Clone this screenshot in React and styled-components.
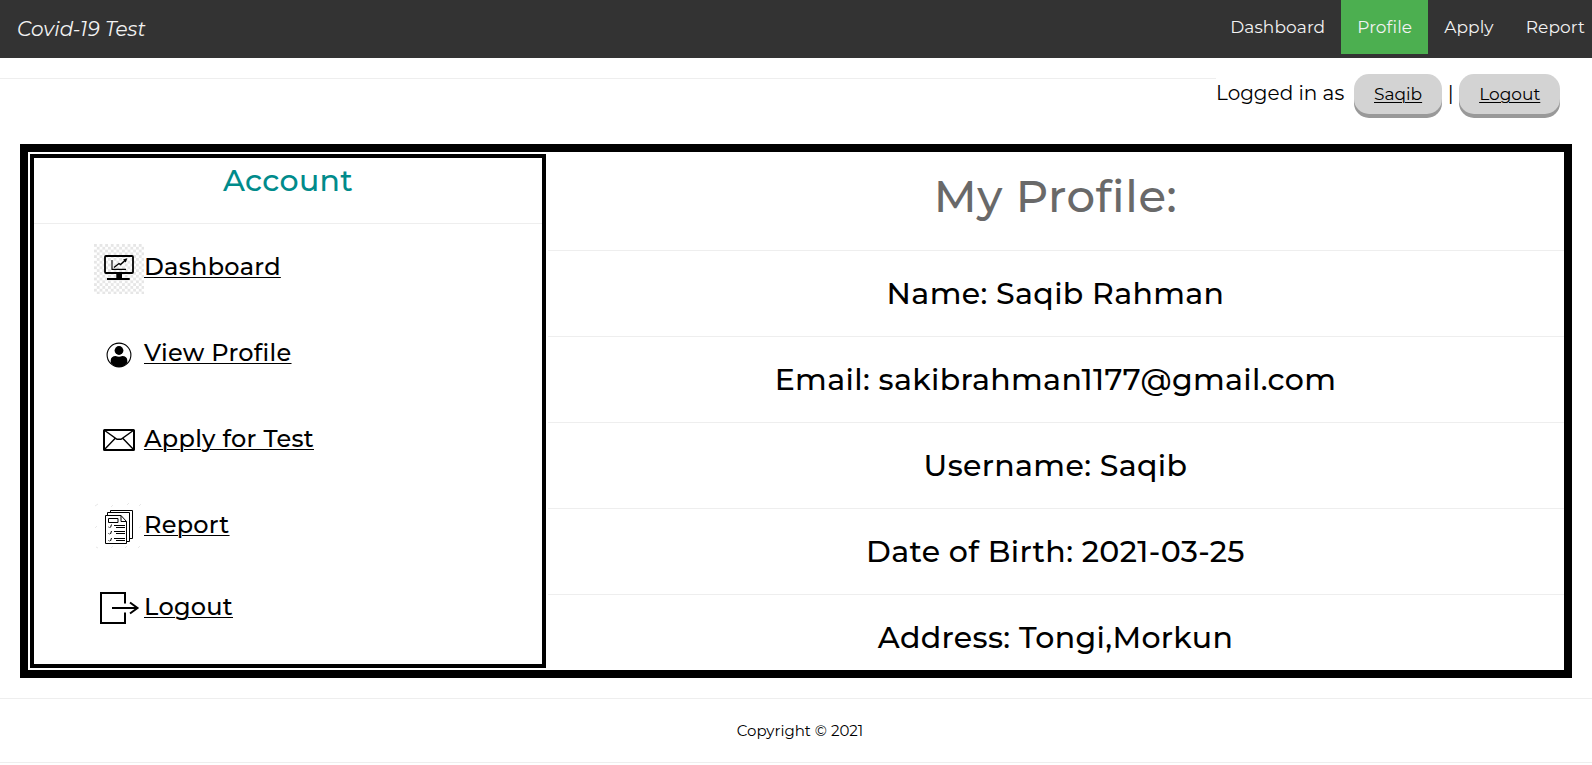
import React from 'react';
import styled, { createGlobalStyle } from 'styled-components';

const GlobalStyle = createGlobalStyle`
  * { box-sizing: border-box; }
  body {
    margin: 0;
    background: #fff;
    color: #000;
    font-family: Montserrat, Inter, "Open Sans", sans-serif;
    overflow: hidden;
  }
  a {
    color: inherit;
    text-decoration-thickness: 1px;
    text-underline-offset: 2px;
  }
`;

const Header = styled.header`
  display: flex;
  justify-content: space-between;
  height: 58px;
  background: #333;
  color: #f2f2f2;
`;

const Brand = styled.span`
  padding-left: 17px;
  font-size: 20px;
  font-style: italic;
  font-weight: 400;
  letter-spacing: 0.08px;
  line-height: 58px;
`;

const Nav = styled.nav`
  display: flex;
  margin-right: -9px;
`;

const NavLink = styled.a`
  height: 54px;
  padding: 0 16px;
  font-size: 17px;
  letter-spacing: 0.1px;
  line-height: 54px;
  text-decoration: none;
  background: ${(p) => (p.$active ? '#4caf50' : 'transparent')};
`;

const Session = styled.div`
  display: flex;
  height: 86px;
  padding-top: 16px;
`;

const SessionRule = styled.div`
  width: 1216px;
  height: 1px;
  margin-top: 4px;
  background: #eee;
`;

const SessionInfo = styled.div`
  display: flex;
  align-items: flex-start;
  font-size: 20px;
  line-height: 38px;
  white-space: nowrap;
`;

const SessionLabel = styled.span`
  width: 138px;
`;

const Divider = styled.span`
  width: 17px;
  text-align: center;
`;

const PillLink = styled.a`
  height: 40px;
  padding: 0 20px;
  border-radius: 15px;
  background: #d3d3d3;
  box-shadow: 0 4px #999;
  font-size: 17px;
  line-height: 41px;
`;

const Frame = styled.main`
  display: flex;
  height: 534px;
  margin: 0 20px;
  border: 8px solid #000;
`;

const Sidebar = styled.aside`
  width: 516px;
  margin: 2px;
  border: 4px solid #000;
`;

const SidebarTitle = styled.h2`
  height: 66px;
  margin: 0;
  border-bottom: 1px solid #eee;
  color: #008b8b;
  font-size: 30px;
  font-weight: 500;
  letter-spacing: 0.35px;
  line-height: 46px;
  text-align: center;
`;

const Menu = styled.ul`
  display: grid;
  grid-template-rows: 86px 86px 86px 82px 50px;
  margin: 0;
  padding: 20px 0 0 60px;
  list-style: none;
`;

const MenuItem = styled.li`
  display: flex;
  height: 50px;
  font-size: 24px;
  font-weight: 500;
  letter-spacing: 0.28px;
  line-height: 45px;
`;

const Icon = styled.svg`
  width: 50px;
  height: 50px;
  fill: none;
  stroke: #000;
  stroke-width: ${(p) => p.$weight || 1.8};
`;

const Profile = styled.section`
  flex: 1;
  overflow: hidden;
  text-align: center;
`;

const ProfileTitle = styled.h1`
  height: 98px;
  margin: 0;
  padding-right: 1px;
  color: #696969;
  font-size: 45px;
  font-weight: 500;
  letter-spacing: 0.6px;
  line-height: 88px;
`;

const Field = styled.div`
  height: 86px;
  padding-right: 1px;
  border-top: 1px solid #eee;
  font-size: 30px;
  font-weight: 500;
  letter-spacing: 0.36px;
  line-height: 86px;
`;

const Footer = styled.footer`
  height: 65px;
  margin-top: 20px;
  border: solid #eee;
  border-width: 1px 0;
  font-size: 15px;
  line-height: 63px;
  text-align: center;
  padding-left: 8px;
`;

const DashboardIcon = () => (
  <Icon viewBox="0 0 50 50">
    <defs>
      <pattern id="checks" width="5.6" height="5.6" patternUnits="userSpaceOnUse">
        <path d="M0 0h2.8v2.8H0zM2.8 2.8h2.8v2.8H2.8z" fill="#e6e6e6" stroke="none" />
      </pattern>
    </defs>
    <path d="M0 0h50v50H0z" fill="url(#checks)" stroke="none" />
    <rect x="11" y="12" width="28" height="17" rx="1" />
    <path d="M18 16v9.4h14" strokeWidth="1.1" />
    <path d="M20 23.5l5-4 1.5 1 5-4.5" strokeWidth="1.4" />
    <path d="M33.3 14.3l-4.2 1.3 2.7 2.8z" fill="#000" stroke="none" />
    <path d="M22.3 29h5.7v5h7.7v2H13v-2h9.3z" fill="#000" stroke="none" />
  </Icon>
);

const PersonIcon = () => (
  <Icon viewBox="0 0 50 50" $weight={1.1}>
    <circle cx="25" cy="25" r="11.9" />
    <circle cx="25" cy="20.5" r="4.4" fill="#000" stroke="none" />
    <path d="M16.7 33v-2.5c0-3 2-4.6 5-4.6 2 1 4.6 1 6.6 0 3 0 5 1.6 5 4.6V33c-4.5 5.3-12 5.3-16.6 0z" fill="#000" stroke="none" />
  </Icon>
);

const EnvelopeIcon = () => (
  <Icon viewBox="0 0 50 50" $weight={2}>
    <rect x="10" y="14" width="30" height="20" rx=".5" />
    <path d="M10 14l13 9.3h4L40 14M10 34l11.5-12M40 34L28.5 22" strokeWidth="1.4" />
  </Icon>
);

const ReportIcon = () => (
  <Icon viewBox="0 0 50 50" $weight={1}>
    <path d="M1 4l3-2M17 5l2-2M33 3l2-2M45 4l2-2M1 26l2-2M2 45l2 1M17 46l2-2M31 46l2-2M44 46l2-2M45 26l2-2" stroke="#e8e8e8" />
    <path d="M16.5 10.500v-2h22v28h-3M13.5 13v-2.500h22v29h-3" />
    <path d="M11.5 13.500h15.500l5.500 6v22h-21zM27 13.500v6h5.500" />
    <path d="M14.5 16.500h9.500v4h-9.500z" />
    <path d="M20 23.500h11M22 25.500h9M20 29.500h11M22 31.500h9M20 36.500h11M22 38.500h9" />
    <path d="M17.5 22.500l-1 3M17.500 29l-1 3M17.500 36l-1 3M14.500 25l1 .5M14.500 31.500l1 .5M14.500 38.500l1 .5" />
  </Icon>
);

const ExitIcon = () => (
  <Icon viewBox="0 0 50 50" $weight={2}>
    <path d="M31 19.500V9H7v30h24V28.500M18 24h25M36 18.500l7.500 5.500-7.500 5.500" />
  </Icon>
);

const navItems = ['Dashboard', 'Profile', 'Apply', 'Report'];

const menuItems = [
  ['Dashboard', DashboardIcon],
  ['View Profile', PersonIcon],
  ['Apply for Test', EnvelopeIcon],
  ['Report', ReportIcon],
  ['Logout', ExitIcon],
];

const fields = [
  'Name: Saqib Rahman',
  'Email: sakibrahman1177@gmail.com',
  'Username: Saqib',
  'Date of Birth: 2021-03-25',
  'Address: Tongi,Morkun',
];

export default function App() {
  return (
    <>
      <GlobalStyle />
      <Header>
        <Brand>Covid-19 Test</Brand>
        <Nav>
          {navItems.map((item) => (
            <NavLink key={item} href="#" $active={item === 'Profile'}>{item}</NavLink>
          ))}
        </Nav>
      </Header>
      <Session>
        <SessionRule />
        <SessionInfo>
          <SessionLabel>Logged in as</SessionLabel>
          <PillLink href="#">Saqib</PillLink>
          <Divider>|</Divider>
          <PillLink href="#">Logout</PillLink>
        </SessionInfo>
      </Session>
      <Frame>
        <Sidebar>
          <SidebarTitle>Account</SidebarTitle>
          <Menu>
            {menuItems.map(([label, Glyph]) => (
              <MenuItem key={label}>
                <Glyph />
                <a href="#">{label}</a>
              </MenuItem>
            ))}
          </Menu>
        </Sidebar>
        <Profile>
          <ProfileTitle>My Profile:</ProfileTitle>
          {fields.map((field) => (
            <Field key={field}>{field}</Field>
          ))}
        </Profile>
      </Frame>
      <Footer>Copyright © 2021</Footer>
    </>
  );
}
